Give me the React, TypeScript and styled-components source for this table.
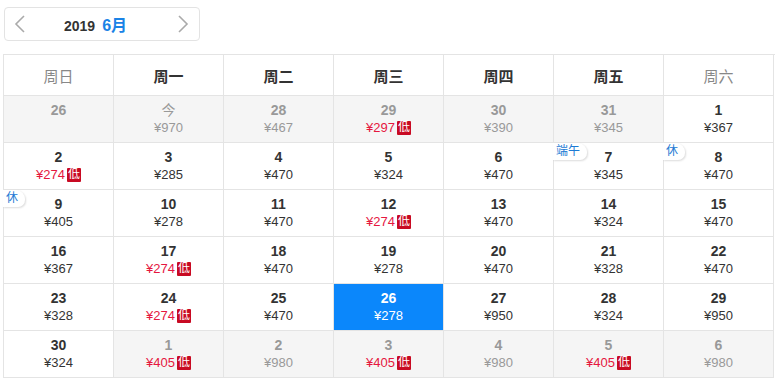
import styled, { createGlobalStyle } from 'styled-components';

const GlobalStyle = createGlobalStyle`
  html, body {
    margin: 0;
    padding: 0;
    background: #fff;
  }
  body {
    font-family: "Liberation Sans", "Noto Sans CJK SC", sans-serif;
    color: #333;
  }
`;

const Page = styled.div`
  width: 776px;
  height: 384px;
  padding: 7px 0 0 3px;
  box-sizing: border-box;
`;

const Nav = styled.div`
  width: 196px;
  height: 34px;
  margin-left: 1px;
  box-sizing: border-box;
  border: 1px solid #e3e3e3;
  border-radius: 4px;
  display: flex;
  align-items: center;
  padding: 0 10px 0 9px;
`;

const Arrow = styled.svg`
  width: 12px;
  height: 18px;

  &:last-child {
    margin-left: auto;
  }
`;

const Title = styled.div`
  display: flex;
  align-items: baseline;
  gap: 7px;
  margin-left: 38px;
`;

const Year = styled.span`
  font-size: 14px;
  font-weight: bold;
  color: #333;
`;

const Month = styled.span`
  font-size: 16px;
  font-weight: bold;
  color: #1a83e6;
`;

const Grid = styled.div`
  margin-top: 13px;
  width: 771px;
  display: grid;
  grid-template-columns: repeat(7, 110px);
  grid-auto-rows: 47px;
  grid-template-rows: 41px;
  border-top: 1px solid #e4e4e4;
  border-left: 1px solid #e4e4e4;
`;

const Head = styled.div<{ $weekend: boolean }>`
  border-right: 1px solid #e4e4e4;
  border-bottom: 1px solid #e4e4e4;
  display: flex;
  align-items: center;
  justify-content: center;
  font-size: 15px;
  font-weight: ${(p) => (p.$weekend ? 'normal' : 'bold')};
  color: ${(p) => (p.$weekend ? '#888' : '#333')};
`;

const Cell = styled.div<{ $muted: boolean; $active: boolean }>`
  position: relative;
  border-right: 1px solid #e4e4e4;
  border-bottom: 1px solid #e4e4e4;
  background: ${(p) => (p.$active ? '#0b87fb' : p.$muted ? '#f5f5f5' : '#fff')};
  color: ${(p) => (p.$active ? '#fff' : p.$muted ? '#999' : '#333')};
  display: flex;
  flex-direction: column;
  align-items: center;
  padding-top: 5px;
  box-sizing: border-box;
`;

const Day = styled.div<{ $today?: boolean }>`
  font-size: 14px;
  line-height: 18px;
  font-weight: ${(p) => (p.$today ? 'normal' : 'bold')};
`;

const Price = styled.div<{ $low: boolean }>`
  font-size: 13px;
  line-height: 17px;
  display: flex;
  align-items: center;
  color: ${(p) => (p.$low ? '#e5173f' : 'inherit')};
`;

const LowBadge = styled.span`
  display: inline-flex;
  align-items: center;
  justify-content: center;
  width: 14px;
  height: 14px;
  margin-left: 2px;
  background: #c80a23;
  color: #fff;
  font-size: 12px;
  border-radius: 1px;
`;

const Tag = styled.span`
  position: absolute;
  top: 0;
  left: -1px;
  padding: 1px 7px 1px 3px;
  font-size: 12px;
  line-height: 15px;
  color: #1d7ad4;
  background: #fff;
  border-radius: 0 9px 7px 0;
  box-shadow: 1px 1px 2px rgba(0, 0, 0, 0.14);
`;

type DayInfo = {
  d: string;
  price?: number;
  low?: boolean;
  muted?: boolean;
  active?: boolean;
  tag?: string;
  today?: boolean;
};

const weeks = ['周日', '周一', '周二', '周三', '周四', '周五', '周六'];

const days: DayInfo[] = [
  { d: '26', muted: true },
  { d: '今', price: 970, muted: true, today: true },
  { d: '28', price: 467, muted: true },
  { d: '29', price: 297, muted: true, low: true },
  { d: '30', price: 390, muted: true },
  { d: '31', price: 345, muted: true },
  { d: '1', price: 367 },
  { d: '2', price: 274, low: true },
  { d: '3', price: 285 },
  { d: '4', price: 470 },
  { d: '5', price: 324 },
  { d: '6', price: 470 },
  { d: '7', price: 345, tag: '端午' },
  { d: '8', price: 470, tag: '休' },
  { d: '9', price: 405, tag: '休' },
  { d: '10', price: 278 },
  { d: '11', price: 470 },
  { d: '12', price: 274, low: true },
  { d: '13', price: 470 },
  { d: '14', price: 324 },
  { d: '15', price: 470 },
  { d: '16', price: 367 },
  { d: '17', price: 274, low: true },
  { d: '18', price: 470 },
  { d: '19', price: 278 },
  { d: '20', price: 470 },
  { d: '21', price: 328 },
  { d: '22', price: 470 },
  { d: '23', price: 328 },
  { d: '24', price: 274, low: true },
  { d: '25', price: 470 },
  { d: '26', price: 278, active: true },
  { d: '27', price: 950 },
  { d: '28', price: 324 },
  { d: '29', price: 950 },
  { d: '30', price: 324 },
  { d: '1', price: 405, low: true, muted: true },
  { d: '2', price: 980, muted: true },
  { d: '3', price: 405, low: true, muted: true },
  { d: '4', price: 980, muted: true },
  { d: '5', price: 405, low: true, muted: true },
  { d: '6', price: 980, muted: true },
];

export default function App() {
  return (
    <Page>
      <GlobalStyle />
      <Nav>
        <Arrow viewBox="0 0 12 18">
          <path d="M10 1 L2 9 L10 17" fill="none" stroke="#aaa" strokeWidth="1.6" />
        </Arrow>
        <Title>
          <Year>2019</Year>
          <Month>6月</Month>
        </Title>
        <Arrow viewBox="0 0 12 18">
          <path d="M2 1 L10 9 L2 17" fill="none" stroke="#aaa" strokeWidth="1.6" />
        </Arrow>
      </Nav>
      <Grid>
        {weeks.map((w, i) => (
          <Head key={w} $weekend={i === 0 || i === 6}>
            {w}
          </Head>
        ))}
        {days.map((day, idx) => (
          <Cell key={`${idx}-day`} $muted={!!day.muted} $active={!!day.active}>
            {day.tag && <Tag>{day.tag}</Tag>}
            <Day $today={day.today}>{day.d}</Day>
            {day.price !== undefined && (
              <Price $low={!!day.low}>
                ¥{day.price}
                {day.low && <LowBadge>低</LowBadge>}
              </Price>
            )}
          </Cell>
        ))}
      </Grid>
    </Page>
  );
}
